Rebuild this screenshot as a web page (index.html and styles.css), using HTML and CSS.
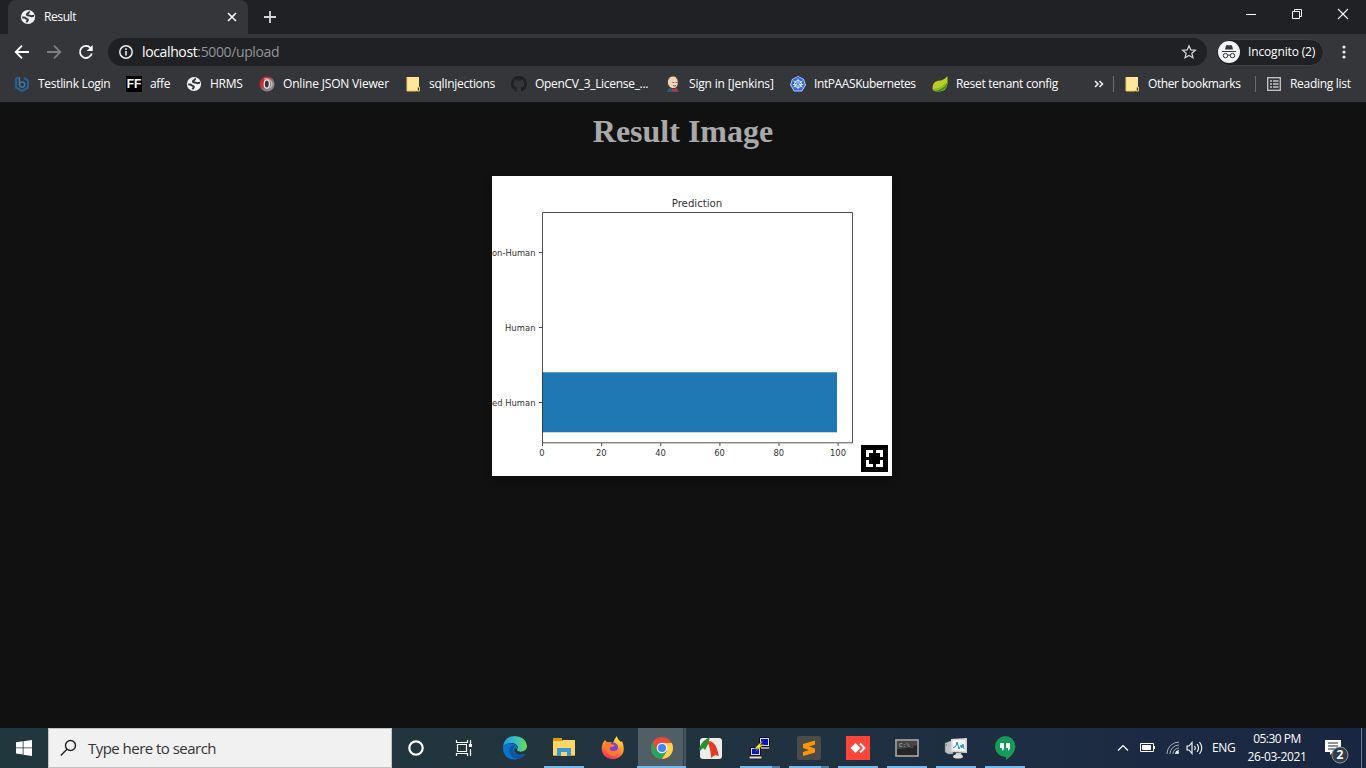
FILE: index.html
```html
<!DOCTYPE html>
<html lang="en">
<head>
<meta charset="utf-8">
<title>Result</title>
<link rel="stylesheet" href="styles.css">
</head>
<body>
<svg class="defs" width="0" height="0"><defs>
<symbol id="globe" viewBox="0 0 16 16"><circle cx="8" cy="8" r="7.1" fill="#f1f3f4"/><path d="M9 2.400C9.500 4 7.500 4.300 7 5.200c-.4 1 .6 1.400 1.800 1.300 1.400-.1 1.700.7 2.600.8.900 0 1.500-.6 2.600-.5M2.200 8.600c1.500-.2 2.900-.2 3.500.7.500.8 1.700.4 2.100 1.200.4 1-.9 1.300-1.200 2.900" fill="none" stroke="#35363a" stroke-width="2"/></symbol>
<symbol id="folder" viewBox="0 0 16 16"><path d="M2 1h12v10.2h-1.2V15H2z" fill="#ffe69a"/><path d="M2 1v14h9M13 11h1.5v4h-2.8" fill="none" stroke="#edc95b"/></symbol>
</defs></svg>
<header class="browser">
  <div class="tabs">
    <div class="tab"><svg width="16" height="16"><use href="#globe"/></svg><span class="tab-name">Result</span><svg class="close" width="10" height="10" viewBox="0 0 10 10"><path d="M1 1l8 8M9 1L1 9" stroke="#fff" stroke-width="1.6"/></svg></div>
    <svg class="new-tab" width="14" height="14" viewBox="0 0 14 14"><path d="M7 1v12M1 7h12" stroke="#d5d6d8" stroke-width="1.8"/></svg>
    <div class="controls">
      <svg width="12" height="12"><path d="M1 6.5h10" stroke="#fff"/></svg>
      <svg width="12" height="12"><path d="M1.5 3.5h7v7h-7zM3.5 3.5v-2h7v7h-2" fill="none" stroke="#fff"/></svg>
      <svg width="12" height="12"><path d="M1 1l10 10M11 1L1 11" stroke="#fff" stroke-width="1.1"/></svg>
    </div>
  </div>
  <div class="toolbar">
    <svg width="16" height="16" viewBox="0 0 16 16" fill="none" stroke="#fff" stroke-width="1.8"><path d="M15 8H2M8 1.7L1.7 8 8 14.3"/></svg>
    <svg width="16" height="16" viewBox="0 0 16 16" fill="none" stroke="#7d7e81" stroke-width="1.8"><path d="M1 8h13M8 1.7L14.3 8 8 14.3"/></svg>
    <svg width="16" height="16" viewBox="0 0 16 16"><path d="M12.5 4A6 6 0 1 0 13.8 9.5" fill="none" stroke="#fff" stroke-width="1.8"/><path d="M14.7 1v6h-6z" fill="#fff"/></svg>
    <div class="address">
      <svg width="16" height="16" viewBox="0 0 16 16"><circle cx="8" cy="8" r="6.2" fill="none" stroke="#eee" stroke-width="1.5"/><path d="M8 7v4.4M8 4.3v1.6" stroke="#eee" stroke-width="1.6"/></svg>
      <span class="url"><b>localhost</b>:5000/upload</span>
      <svg class="star" width="16" height="16" viewBox="0 0 16 16"><path d="M8 1.8l1.8 4.1 4.5.4-3.4 3 1 4.4L8 11.4l-3.9 2.3 1-4.4-3.4-3 4.5-.4z" fill="none" stroke="#d0d1d3" stroke-width="1.3"/></svg>
    </div>
    <div class="incognito"><svg width="22" height="22" viewBox="0 0 22 22"><circle cx="11" cy="11" r="11" fill="#f1f3f4"/><path d="M7 8.500l1-4 1.500-.5 1.500.5 1.500-.5 1.500.5 1 4z" fill="#35363a"/><path d="M4 10.500h14M9.600 14.400q1.400-.8 2.800 0" fill="none" stroke="#35363a"/><g fill="none" stroke="#35363a"><circle cx="7.500" cy="14.600" r="2.200"/><circle cx="14.500" cy="14.600" r="2.200"/></g></svg><span>Incognito (2)</span></div>
    <svg class="dots" width="4" height="16" fill="#e8eaed"><circle cx="2" cy="3" r="1.6"/><circle cx="2" cy="8" r="1.6"/><circle cx="2" cy="13" r="1.6"/></svg>
  </div>
  <nav class="bookmarks">
    <div class="mark"><svg width="16" height="16"><path d="M4 1.500L2 3v8.500l6 3.500 6-3.500v-7L10 2" fill="none" stroke="#285f8c" stroke-width="2.200"/><path d="M5.400 1v8" stroke="#397aaa" stroke-width="1.500"/><circle cx="8.100" cy="8.600" r="2.600" fill="none" stroke="#397aaa" stroke-width="1.500"/></svg><span>Testlink Login</span></div>
    <div class="mark"><i class="ff">FF</i><span>affe</span></div>
    <div class="mark"><svg width="16" height="16"><use href="#globe"/></svg><span>HRMS</span></div>
    <div class="mark json"><svg width="16" height="16"><defs><linearGradient id="json" y2="1"><stop offset=".35" stop-color="#bd2c37"/><stop offset=".65" stop-color="#858585"/></linearGradient></defs><circle cx="8" cy="8" r="7.600" fill="url(#json)"/><path d="M5 3a5.500 5.500 0 0 1 6 9" fill="none" stroke="#eee" stroke-opacity=".5" stroke-width="1.500"/><ellipse cx="7.800" cy="8" rx="2.600" ry="4.200" fill="#35363a" stroke="#f5eaea" stroke-width="1.200"/></svg><span>Online JSON Viewer</span></div>
    <div class="mark"><svg width="16" height="16"><use href="#folder"/></svg><span>sqlInjections</span></div>
    <div class="mark"><svg width="16" height="16"><path d="M6 15.7A8 8 0 1 1 10 15.7v-2.5c0-.8-.3-1.200-.6-1.500 2.700-.3 3.800-1.600 3.800-3.900 0-1-.3-1.700-.9-2.300.2-.6.2-1.300-.1-2.100-1 0-1.800.7-2.200 1H6c-.5-.4-1.300-1-2.300-1-.3.8-.3 1.500 0 2.100-.7.6-1 1.300-1 2.300 0 2.300 1.100 3.600 3.800 3.900-.4.3-.6.8-.6 1.400-1.200.5-2-.1-2.500-1-.3-.5-.8-.7-1.200-.5.8.5.9 2.400 2.500 2.400H6z" fill="#202125"/></svg><span>OpenCV_3_License_...</span></div>
    <div class="mark jenkins"><svg width="16" height="16"><path d="M3 4q1-4 6-3.500 4 .5 4 5.500 0 4-3 6H7q-3-1-4-4z" fill="#efd3ba"/><path d="M3 10Q1 5 4 2.500M11 1.500q3 2 2 6M7.500 6.500H9M10.500 6.500H12M8 9.500q2 1 3 0" fill="none" stroke="#4d4542" stroke-width=".8"/><path d="M2 16l2-4 4 1 4-1 2 4z" fill="#355c70"/><path d="M7 12.500l2 .8 3-.8v3l-3-.8-2 .8z" fill="#e42830"/></svg><span>Sign in [Jenkins]</span></div>
    <div class="mark kubernetes"><svg width="16" height="16"><path d="M8 0l6 3 2 6-4 6.500H4L0 9l2-6z" fill="#b8cbf5"/><path d="M8 .8l5.300 2.700L14.900 9l-3.300 5.500H4.400L1.100 9l1.600-5.500z" fill="#326ce5"/><g fill="none" stroke="#eef4ff" stroke-width=".9"><circle cx="8" cy="8" r="3.500"/><path d="M8 2.700V13M3.500 5l9 6M12.500 5l-9 6M2.800 8.500h10.400"/></g><circle cx="8" cy="8" r="1" fill="#326ce5"/></svg><span>IntPAASKubernetes</span></div>
    <div class="mark"><svg width="16" height="16"><path d="M15.500 0v8q-1 8-10 7.500-4 0-5-2.200Q0 6 6 4.700q6 0 9.500-4.700z" fill="#b8ce27"/><path d="M15.500 6q0 7-7 9.300-4 1-6.500-.5Q11 14 15.500 6z" fill="#448f22"/><path d="M1.500 13.500q8-.5 12-6" fill="none" stroke="#76ad20"/></svg><span>Reset tenant config</span></div>
    <svg class="overflow" width="10" height="10" fill="none" stroke="#eee" stroke-width="1.6"><path d="M1 2l3 3-3 3M5.500 2l3 3-3 3"/></svg>
    <i class="rule"></i>
    <div class="mark other"><svg width="16" height="16"><use href="#folder"/></svg><span>Other bookmarks</span></div>
    <i class="rule"></i>
    <div class="mark reading"><svg width="16" height="16" fill="none" stroke="#c7c8ca" stroke-width="1.3"><rect x="1.7" y="1.7" width="12.6" height="12.6"/><path d="M4 5h2M7 5h5.500M4 8h2M7 8h5.500M4 11h2M7 11h5.500"/></svg><span>Reading list</span></div>
  </nav>
</header>
<main>
  <h1>Result Image</h1>
  <div class="result">
    <svg class="chart" width="400" height="300" viewBox="0 0 400 300">
      <rect width="400" height="300" fill="#fff"/>
      <rect x="50" y="196.3" width="295" height="60" fill="#1f77b4"/>
      <path d="M50.500 36.500h310v230.300h-310zM47 76.500h3.500M47 151.500h3.500M47 226.500h3.500M50.500 267v3M109.600 267v3M168.800 267v3M227.900 267v3M287 267v3M346.100 267v3" fill="none" stroke="#333" stroke-opacity=".85"/>
      <g class="plot-text">
        <text class="plot-title" x="205" y="30.500" text-anchor="middle">Prediction</text>
        <text x="0" y="80" textLength="43.500">on-Human</text><text x="13" y="155" textLength="30.500">Human</text><text x="0" y="230" textLength="43.500">ed Human</text>
        <g text-anchor="middle"><text x="50" y="280">0</text><text x="109.300" y="280">20</text><text x="168.500" y="280">40</text><text x="227.500" y="280">60</text><text x="286.700" y="280">80</text><text x="346" y="280">100</text></g>
      </g>
    </svg>
    <svg class="expand" width="27" height="27"><rect width="27" height="27"/><path d="M6.500 12V6.500H12M15 6.500h5.500V12M20.500 15v5.500H15M12 20.500H6.500V15" fill="none" stroke="#fff" stroke-width="3"/></svg>
  </div>
</main>
<footer class="taskbar">
  <div class="start"><svg width="16" height="16" fill="#fff"><path d="M0 2.200L6.700 1.300v6.200H0zM7.500 1.200L16 0v7.500H7.500zM0 8.300h6.700v6.200L0 13.600zM7.500 8.300H16V16l-8.500-1.200z"/></svg></div>
  <div class="search"><svg width="18" height="18" fill="none" stroke="#222" stroke-width="1.4"><circle cx="10.500" cy="6.500" r="5"/><path d="M7 10.300L.8 16.500"/></svg><span>Type here to search</span></div>
  <div class="app system"><svg width="18" height="18"><circle cx="9" cy="9" r="6.700" fill="none" stroke="#fff" stroke-width="2.200"/></svg></div>
  <div class="app system"><svg width="18" height="18" fill="none" stroke="#fff" stroke-width="1.200"><path d="M1.500 1v2.500h11V1M2.500 5.500h9v7h-9zM1.500 17v-2.500h11V17M15.500 1v4M15.500 10v7"/><path d="M14 5h3v3h-3z" fill="#fff" stroke="none"/></svg></div>
  <div class="app edge"><svg width="24" height="24" viewBox="0 0 24 24"><defs><linearGradient id="e"><stop stop-color="#1b9de2"/><stop offset=".55" stop-color="#35c1c8"/><stop offset="1" stop-color="#70dc43"/></linearGradient></defs><path d="M0 11Q1 0 12 0q11 1 12 10c0 6-8 7-10 4l1-3Q13 7 9 7 3 7 0 11z" fill="url(#e)"/><path d="M0 11q4-5 10-3 5 1 4 5l-2-1c-2 3 1 9 10 6-5 8-21 8-22-5z" fill="#0874c9"/><path d="M12 9q-6 0-6 6 1 7 9 8 5-1 8-5-8 3-12-1-2-4 1-8z" fill="#1053a1"/></svg></div>
  <div class="app running"><svg width="22" height="20"><path d="M0 2V0h9v4H0z" fill="#d99b16"/><path d="M0 3h9l1-1h12v16H0z" fill="#ffd666"/><path d="M4 18v-8h14v8h-4v-4H8v4z" fill="#3996d7"/><path d="M0 17h4v1H0zM18 17h4v1h-4z" fill="#c99731"/></svg></div>
  <div class="app"><svg width="24" height="24"><defs><linearGradient id="f" x1=".7" x2=".3" y2="1"><stop stop-color="#ffed38"/><stop offset=".5" stop-color="#ff942e"/><stop offset="1" stop-color="#ed2862"/></linearGradient></defs><path d="M1 10Q2 6 4 4l2 3 3-1 3 1Q13 3 16 0q0 3 4 6l1-1q3 7 1 12c-4 8-16 8-20 1Q0 14 1 10z" fill="url(#f)"/><circle cx="12" cy="11.500" r="5" fill="#7641dc"/><path d="M4 6q4-1 6 2l4 1q-2 3-5 2-1 4 3 4 5 0 6-4 1 7-5 9-7 0-8-8z" fill="#ff792b"/></svg></div>
  <div class="app chrome"><svg width="22" height="22" viewBox="0 0 22 22"><circle cx="11" cy="11" r="11" fill="#e64b3c"/><path d="M1.500 5.500A11 11 0 0 0 11 22l5-8-5 2-5-2z" fill="#25a65a"/><path d="M11 6h9.800A11 11 0 0 1 11 22l5-8z" fill="#fed44d"/><circle cx="11" cy="11" r="5.300" fill="#fff"/><circle cx="11" cy="11" r="4.100" fill="#4285f4"/></svg></div>
  <div class="app"><svg width="24" height="24"><rect x="1" y="2" width="22" height="21" rx="3" fill="#ededed"/><path d="M0 13Q3 4 11 1q-1 7-5 13l-2-2-3 3z" fill="#24902e"/><path d="M8 5q7-1 10 8l2 7-4-1-4 3q0-9-4-17z" fill="#e83b24"/></svg></div>
  <div class="app running grouped"><svg width="24" height="24"><path d="M11.500 1.500h10v9h-10z" fill="#d9d9cf" stroke="#111"/><path d="M13 3h7v6h-7z" fill="#0712cf"/><path d="M11 11h11l-1 2H11z" fill="#ddd" stroke="#222" stroke-width=".7"/><path d="M2.500 11.500h10v8h-10z" fill="#d9d9cf" stroke="#111"/><path d="M4 13h7v5H4z" fill="#0712cf"/><path d="M1 20h13v3H1z" fill="#ddd" stroke="#222"/><path d="M13 6l-7 7 4-1-3 4 9-8-4 1 3-4z" fill="#ffef00" stroke="#555" stroke-width=".5"/></svg></div>
  <div class="app running grouped"><svg width="24" height="24"><rect width="24" height="24" rx="2" fill="#4b4b4b"/><path d="M6 8l12-3.500v4L12 10.500l6 2v4L6 20v-4l6-2-6-2z" fill="#ff9800"/></svg></div>
  <div class="app running"><svg width="24" height="24"><path d="M0 0h24v24H0z" fill="#ff453a"/><path d="M9.500 7l5 5-5 5-5-5z" fill="#fff"/><path d="M14 7.500l4.500 4.500-4.500 4.500" fill="none" stroke="#fff" stroke-width="2"/></svg></div>
  <div class="app running"><svg width="24" height="20"><rect x="1" y="2" width="22" height="16" fill="#262626" stroke="#b1b1b1" stroke-width="1.500"/><path d="M2 11q10 0 20-4V3H2z" fill="#454545"/><text class="prompt" x="4" y="9">C:\_</text></svg></div>
  <div class="app running"><svg width="24" height="24"><path d="M1 7l8-3v14H4l-3-2z" fill="#bbc3c3" stroke="#667" stroke-width=".6"/><path d="M7 3l16-1v15L7 16z" fill="#d5dadd"/><path d="M8.500 4.500L21 4v11l-12.500-1z" fill="#fff"/><path d="M9 12l3-2 1-4 2 7 2-4 1 3 1-4 1 5" fill="none" stroke="#298bcf"/><path d="M12 17h5l1 3h-7z" fill="#ccc"/><ellipse cx="14" cy="20.500" rx="5" ry="2" fill="#ddd"/><path d="M2 8h1v2H2z" fill="#64b431"/></svg></div>
  <div class="app running"><svg width="22" height="24"><path d="M11 0a10.500 10.500 0 0 1 10.500 10.500Q21 18 12 24v-3A10.500 10.500 0 1 1 11 0z" fill="#159c58"/><path d="M6 7h4v6l-2 2v-3H6zM12 7h4v6l-2 2v-3h-2z" fill="#fff"/></svg></div>
  <div class="tray">
    <svg width="12" height="8" fill="none" stroke="#fff" stroke-width="1.200"><path d="M1 6.500l5-5 5 5"/></svg>
    <svg class="battery" width="16" height="10" fill="none" stroke="#fff"><path d="M.5.500h13v8H.5zM14.500 3v3"/><path d="M2.500 2.500h8v4h-8z" fill="#fff"/></svg>
    <svg class="wifi" width="14" height="14" fill="none" stroke="#a4adb9"><path d="M1 13A12 12 0 0 1 13 1M4 13a9 9 0 0 1 9-9M7 13a6 6 0 0 1 6-6"/><circle cx="11.500" cy="11.500" r="1.500" fill="#fff" stroke="none"/><path d="M9.500 13q0-3.500 3.500-3.500" stroke="#fff"/></svg>
    <svg class="sound" width="17" height="14" fill="none" stroke="#fff" stroke-width="1.100"><path d="M1 5h2l3-3.500v11L3 9H1zM8.500 5q1.500 2 0 4M11 3q3 4 0 8M13.500 1q4.500 6 0 12"/></svg>
    <span class="lang">ENG</span>
    <div class="clock"><span>05:30 PM</span><span class="date">26-03-2021</span></div>
    <svg class="notice" width="26" height="26"><path d="M1 2h16v12h-8l-3 3v-3H1z" fill="#fff"/><path d="M4 5h10M4 8h10M4 11h7" stroke="#1c2a43"/><circle cx="16" cy="17" r="8" fill="#343d47" stroke="#8c949f"/><text x="16" y="21" text-anchor="middle">2</text></svg>
    <i class="desktop"></i>
  </div>
</footer>
</body>
</html>
```
FILE: styles.css
```css
* { box-sizing: border-box; }
body { margin: 0; width: 1366px; height: 768px; overflow: hidden; display: flex; flex-direction: column; background: #111; color: #fff; font: 12px/16px "Open Sans", sans-serif; }
svg { display: block; flex: none; }
.defs { position: absolute; }
.browser { height: 103px; flex: none; background: #35363a; border-bottom: 1px solid #161616; }
.tabs { height: 34px; background: #202124; display: flex; padding-left: 8px; }
.tab { width: 240px; height: 34px; background: #35363a; border-radius: 8px 8px 0 0; display: flex; align-items: center; padding: 0 11px 0 12px; }
.tab-name { margin-left: 8px; letter-spacing: -.4px; }
.close { margin-left: auto; }
.new-tab { margin: 10px 0 0 15px; }
.controls { margin: 8px 17px 0 auto; display: flex; gap: 34px; }
.toolbar { height: 36px; display: flex; align-items: center; padding-left: 14px; }
.toolbar > svg + svg { margin-left: 16px; }
.address { margin-left: 14px; width: 1099px; height: 28px; border-radius: 14px; background: #202124; display: flex; align-items: center; padding: 0 10px; }
.url { margin-left: 8px; font-size: 14px; line-height: 20px; letter-spacing: -.37px; color: #929397; }
.url b { font-weight: 400; color: #fff; }
.star { margin-left: auto; }
.incognito { width: 108px; height: 27px; margin-left: 9px; border: 1px solid #3f4044; border-radius: 14px; background: #202124; display: flex; align-items: center; padding-left: 1px; gap: 8px; letter-spacing: -.15px; white-space: nowrap; flex: none; }
.toolbar > .dots { margin-left: 18px; }
.bookmarks { height: 28px; display: grid; grid-template-columns: 112px 60px 73px 146px 106px 154px 125px 142px 144px 37px 11px 131px 11px 91px; padding-left: 14px; align-items: center; }
.mark { display: flex; align-items: center; gap: 8px; white-space: nowrap; letter-spacing: -.3px; }
.json, .jenkins { letter-spacing: -.18px; }
.kubernetes, .other { letter-spacing: -.4px; }
.ff { width: 16px; height: 16px; background: #000; font: bold 12px/16px "Liberation Sans", sans-serif; letter-spacing: -.2px; text-align: center; }
.overflow { margin-left: 18px; }
.rule { height: 16px; width: 1px; background: #6b6c70; }
main { height: 625px; display: flex; flex-direction: column; align-items: center; background: #111; }
h1 { margin: 9px 0 26px; font: bold 32px/38px "Liberation Serif", serif; color: #a9a9a9; }
.result { position: relative; width: 400px; height: 300px; margin-left: 18px; box-shadow: 0 3px 8px #0004; }
.plot-text { font: 8.35px "DejaVu Sans", sans-serif; fill: #333; }
.plot-title { font-size: 10.2px; }
.expand { position: absolute; right: 4px; bottom: 4px; }
.taskbar { height: 40px; flex: none; display: flex; background: linear-gradient(90deg, #20373e, #22343f 48%, #1d2d43 75%, #192641); }
.start { width: 48px; display: flex; align-items: center; justify-content: center; }
.search { width: 344px; background: #f1f1f1; border: 1px solid #c3c3c3; color: #333; display: flex; align-items: center; padding-left: 11px; gap: 10px; font-size: 15px; letter-spacing: -.53px; }
.app { position: relative; width: 49px; flex: none; display: flex; align-items: center; justify-content: center; }
.system { width: 48px; }
.edge { margin-left: 2px; }
.running::after { content: ""; position: absolute; left: 5px; bottom: 0; width: 40px; height: 2px; background: #76b9ed; }
.grouped::after { background: linear-gradient(90deg, #76b9ed 32px, #527e9f 32px); }
.chrome { background: linear-gradient(90deg, transparent 1px, #505e65 1px 46px, #303e46 46px 47px, #46545c 47px); border-bottom: 2px solid #76b9ed; }
.chrome svg { position: relative; top: 1px; }
.prompt { font: 6px "Liberation Mono", monospace; fill: #bbb; }
.tray { margin-left: auto; display: flex; align-items: center; }
.battery { margin-left: 11px; }
.wifi { margin-left: 10px; }
.sound { margin-left: 6px; }
.lang { width: 26px; margin-left: 9px; letter-spacing: -.4px; }
.clock { width: 66px; margin-left: 6px; display: flex; flex-direction: column; align-items: center; line-height: 18px; letter-spacing: -.5px; }
.date { letter-spacing: -.35px; }
.notice { margin-left: 14px; margin-top: 6px; font: bold 12px "Open Sans", sans-serif; fill: #fff; }
.desktop { margin-left: 11px; width: 1px; height: 40px; background: #707b8b; margin-right: 4px; }
```
